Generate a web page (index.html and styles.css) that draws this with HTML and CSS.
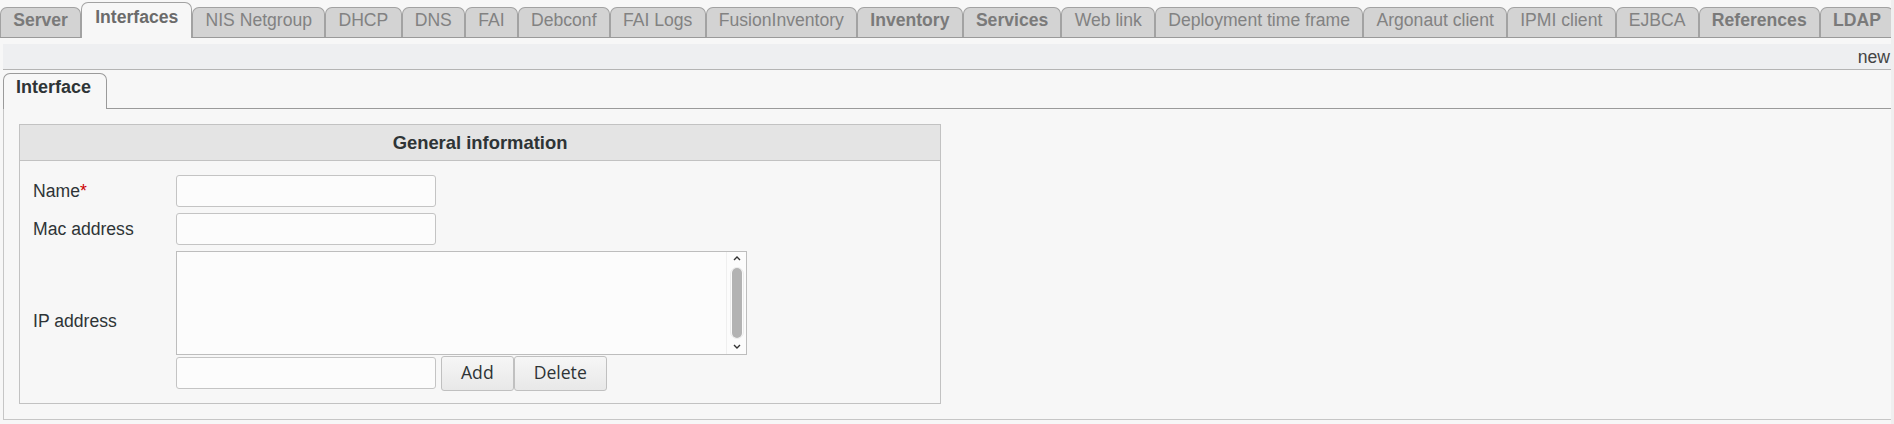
FILE: index.html
```html
<!DOCTYPE html>
<html>
<head>
<meta charset="utf-8">
<title>Interfaces</title>
<link rel="stylesheet" href="styles.css">
</head>
<body>
<div class="page">
  <nav class="tabs">
    <span class="tab bold">Server</span>
    <span class="tab bold active">Interfaces</span>
    <span class="tab">NIS Netgroup</span>
    <span class="tab">DHCP</span>
    <span class="tab">DNS</span>
    <span class="tab">FAI</span>
    <span class="tab">Debconf</span>
    <span class="tab">FAI Logs</span>
    <span class="tab">FusionInventory</span>
    <span class="tab bold">Inventory</span>
    <span class="tab bold">Services</span>
    <span class="tab">Web link</span>
    <span class="tab">Deployment time frame</span>
    <span class="tab">Argonaut client</span>
    <span class="tab">IPMI client</span>
    <span class="tab">EJBCA</span>
    <span class="tab bold">References</span>
    <span class="tab bold">LDAP</span>
  </nav>

  <div class="toolbar"><span class="toolbar-text">new</span></div>

  <div class="subtabs">
    <span class="subtab">Interface</span>
  </div>

  <div class="panel">
    <section class="box">
      <h2 class="box-title">General information</h2>
      <div class="form">
        <label class="label">Name<span class="req">*</span></label>
        <div class="field"><input class="text" type="text"></div>

        <label class="label">Mac address</label>
        <div class="field"><input class="text" type="text"></div>

        <label class="label">IP address</label>
        <div class="field stack">
          <div class="listbox">
            <div class="list-items"></div>
            <div class="sbar">
              <svg class="chev" width="8" height="6" viewBox="0 0 8 6"><path d="M1 5 L4 2 L7 5" fill="none" stroke="#333" stroke-width="1.4"/></svg>
              <div class="track"><div class="thumb"></div></div>
              <svg class="chev down" width="8" height="6" viewBox="0 0 8 6"><path d="M1 1 L4 4 L7 1" fill="none" stroke="#333" stroke-width="1.4"/></svg>
            </div>
          </div>
          <div class="addrow">
            <input class="text small" type="text">
            <button class="btn first" type="button">Add</button>
            <button class="btn" type="button">Delete</button>
          </div>
        </div>
      </div>
    </section>
  </div>
</div>
</body>
</html>
```

FILE: styles.css
```css
html {
  background: #efefef;
}
body {
  margin: 0;
  font-family: "Liberation Sans", Arial, sans-serif;
  font-size: 17.6px;
  color: #2e3436;
}
.page {
  width: 1891px;
  height: 424px;
  background: #f7f7f7;
  overflow: hidden;
}

/* top tabs */
.tabs {
  display: flex;
  align-items: flex-end;
  height: 35px;
  padding-top: 2px;
  border-bottom: 1px solid #9a9a9a;
}
.tab {
  box-sizing: border-box;
  height: 30px;
  padding: 2px 12.2px 0;
  line-height: 20px;
  white-space: nowrap;
  background: #d3d3d3;
  color: #828282;
  border: 1px solid #a2a2a2;
  border-bottom: none;
  border-radius: 7px 7px 0 0;
}
.tab.bold {
  font-weight: bold;
  color: #7a7a7a;
}
.tab.active {
  height: 36px;
  margin-bottom: -1px;
  padding: 4px 13px 0;
  background: #f7f7f7;
  color: #6b6b6b;
}

/* toolbar strip */
.toolbar {
  margin: 6px 0 0 3px;
  height: 25px;
  background: #eeeff1;
  border-bottom: 1px solid #b4b4b4;
  display: flex;
  justify-content: flex-end;
  align-items: center;
  overflow: hidden;
}
.toolbar-text {
  margin-right: 1px;
  color: #444;
  font-size: 17.6px;
  line-height: 20px;
}

/* sub tabs */
.subtabs {
  display: flex;
  align-items: flex-end;
  margin-left: 3px;
  padding-top: 3px;
  border-bottom: 1px solid #9a9a9a;
}
.subtab {
  box-sizing: border-box;
  height: 36px;
  margin-bottom: -1px;
  padding: 3px 15px 0 12px;
  line-height: 20px;
  font-weight: bold;
  font-size: 18px;
  color: #2e3436;
  background: #f7f7f7;
  border: 1px solid #9a9a9a;
  border-bottom: none;
  border-radius: 7px 7px 0 0;
}

/* panel */
.panel {
  margin-left: 3px;
  padding: 15px;
  border-left: 1px solid #c6c6c6;
  border-bottom: 1px solid #c6c6c6;
}
.box {
  width: 922px;
  box-sizing: border-box;
  border: 1px solid #c2c2c2;
  background: #f7f7f7;
}
.box-title {
  margin: 0;
  height: 35px;
  line-height: 35px;
  text-align: center;
  font-size: 18.4px;
  font-weight: bold;
  color: #2e3436;
  background: #e4e4e4;
  border-bottom: 1px solid #c2c2c2;
}
.form {
  display: grid;
  grid-template-columns: 143px auto;
  row-gap: 6px;
  align-items: center;
  padding: 14px 13px 12px 13px;
}
.label {
  color: #2e3436;
  line-height: 20px;
}
.req {
  color: #cc0000;
}
.field {
  display: flex;
}
.stack {
  flex-direction: column;
}
.text {
  box-sizing: border-box;
  width: 260px;
  height: 32px;
  margin: 0;
  border: 1px solid #c4c4c4;
  border-radius: 3px;
  background: #fcfcfc;
  font: inherit;
}

/* list box */
.listbox {
  box-sizing: border-box;
  width: 571px;
  height: 104px;
  display: flex;
  border: 1px solid #bdbdbd;
  background: #fcfcfc;
}
.list-items {
  flex: 1;
}
.sbar {
  width: 19px;
  display: flex;
  flex-direction: column;
  align-items: center;
  border-left: 1px solid #efefef;
}
.chev {
  display: block;
  margin-top: 3px;
}
.chev.down {
  margin-top: 5px;
}
.track {
  margin-top: 6px;
  padding: 0 1px;
  border: 1px solid #ececec;
  border-radius: 8px;
}
.thumb {
  width: 10px;
  height: 70px;
  border-radius: 5px;
  background: #b3b3b3;
}

/* add row */
.addrow {
  display: flex;
  align-items: flex-start;
  margin-top: 1px;
}
.text.small {
  margin-top: 1px;
}
.btn {
  box-sizing: border-box;
  height: 35px;
  margin: 0;
  padding: 0 19px 3px;
  font-family: "Open Sans", "Noto Sans", sans-serif;
  font-size: 17.6px;
  color: #2e3436;
  background: linear-gradient(#f6f6f6, #e8e8e8);
  border: 1px solid #c0c0c0;
  border-radius: 3px;
}
.btn.first {
  margin-left: 5px;
}
```
